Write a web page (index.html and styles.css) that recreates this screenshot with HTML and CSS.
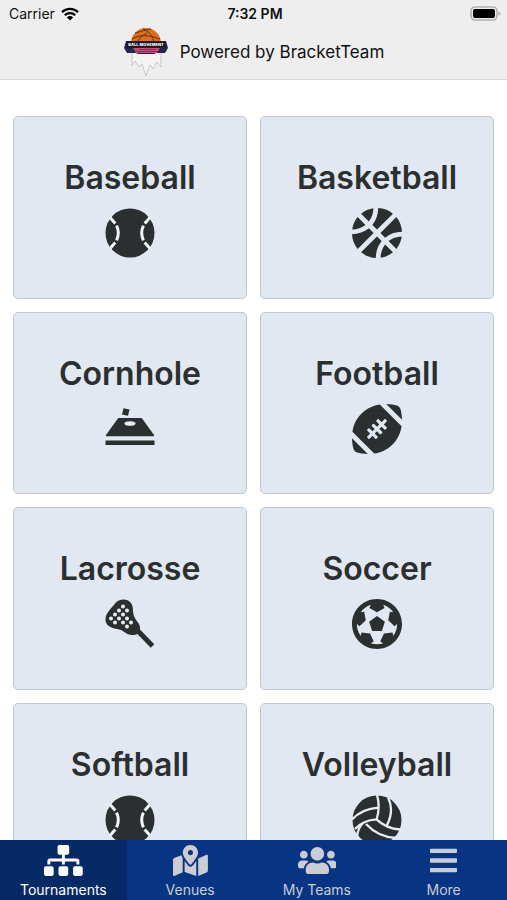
FILE: index.html
```html
<!DOCTYPE html>
<html lang="en">
<head>
<meta charset="utf-8">
<meta name="viewport" content="width=device-width, initial-scale=1">
<title>Tournaments</title>
<link rel="stylesheet" href="styles.css">
</head>
<body>
<header class="top">
  <div class="status">
    <div class="carrier">
      <span>Carrier</span>
      <svg class="wifi" viewBox="0 0 18 14" aria-hidden="true"><path d="M1 5.2a11.5 11.5 0 0 1 16 0M3.8 8.2a7.4 7.4 0 0 1 10.4 0" fill="none" stroke="#000" stroke-width="2.3"/><path d="M9 13.4 5.9 10.4a4.4 4.4 0 0 1 6.2 0z"/></svg>
    </div>
    <time class="clock">7:32 PM</time>
    <div class="power">
      <svg class="battery" viewBox="0 0 31 15" aria-hidden="true"><rect x="1" y="1" width="26" height="13" rx="4" fill="#eee" stroke="#b1b1b1" stroke-width="1.6"/><rect x="3" y="3" width="22" height="9" rx="2"/><path d="M28.4 5.2q2 .8 2 2.3t-2 2.3z" fill="#b1b1b1"/></svg>
    </div>
  </div>
  <div class="brand">
    <svg class="logo" viewBox="0 0 46 50" aria-hidden="true">
      <path d="M9 26v13l3-5 4 6 3-3 4 12 4-11 3 4 4-7 4 5V26" fill="#f3f3f3" stroke="#bdbdbd" stroke-width=".8"/>
      <path d="M8 16a15 15 0 0 1 30 0z" fill="#dc6f1c"/>
      <path d="M9 12Q20 5 37 12M20 1.500Q29 6 31 15M12 6Q22 3 28 2M14 15Q17 9 24 6" fill="none" stroke="#6b3410" stroke-width="1"/>
      <path d="M3 14h40l2 7-3 5H33l-2 1H15l-2-1H4l-3-5z" fill="#202850"/>
      <path d="M10 21h27l-3 5H13z" fill="#c0506f"/>
      <path d="M12 24.500h23M16 22.500h17" stroke="#732c56" stroke-width=".8"/>
      <path d="M4 14.500h38l1 6H3z" fill="#19181e"/>
      <text x="23" y="19" text-anchor="middle" class="logo-text">BALL MOVEMENT</text>
    </svg>
    <span>Powered by BracketTeam</span>
  </div>
</header>

<main class="sports">
  <a class="card" href="#baseball"><h2>Baseball</h2>
    <svg class="ball" viewBox="0 0 50 50" aria-hidden="true"><circle cx="25" cy="25" r="24.5"/><path class="seam" d="M5 9.5 10.3 15.5M11.6 17.7q3.4 7.3 0 14.6M10.3 34.5 5 40.5M45 9.5 39.7 15.5M38.4 17.7q-3.4 7.3 0 14.6M39.7 34.5 45 40.5"/></svg></a>
  <a class="card" href="#basketball"><h2>Basketball</h2>
    <svg class="ball" viewBox="0 8 496 496" aria-hidden="true"><path d="M212.3 10.3c-43.8 6.3-86.2 24.1-122.2 53.8l77.4 77.4c27.8-35.8 43.3-81.2 44.8-131.2zM248 222L405.9 64.1c-42.4-35-93.6-53.5-145.5-56.1-1.2 63.9-21.5 122.3-58.7 167.7L248 222zM56.1 98.1c-29.7 36-47.5 78.4-53.8 122.2 50-1.5 95.5-17 131.2-44.8L56.1 98.1zm272.2 204.2c45.3-37.1 103.7-57.4 167.7-58.7-2.6-51.9-21.1-103.1-56.1-145.5L282.1 256l46.2 46.3zM248 290L90.1 447.9c42.4 34.9 93.6 53.5 145.5 56.1 1.3-64 21.6-122.4 58.7-167.7L248 290zm191.9 123.9c29.7-36 47.5-78.4 53.8-122.2-50.1 1.6-95.5 17.1-131.2 44.8l77.4 77.4zM167.7 209.7C122.3 246.9 63.9 267.3 0 268.4c2.6 51.9 21.1 103.1 56.1 145.5L213.9 256l-46.2-46.3zm116 292c43.8-6.3 86.2-24.1 122.2-53.8l-77.4-77.4c-27.7 35.7-43.2 81.2-44.8 131.2z"/></svg></a>
  <a class="card" href="#cornhole"><h2>Cornhole</h2>
    <svg class="ball" viewBox="0 0 50 50" aria-hidden="true"><path d="M18.5 4.200 24.500 5.500 23 11.800 17 10.400zM14 14h22q.8 0 1.300.8L49.200 31.200q.3 1-.7 1H1.500q-1 0-.7-1L12.700 14.800Q13.200 14 14 14zM.500 36.500h49v4.500H.500z"/><ellipse cx="25" cy="19.500" rx="5.500" ry="2.300" class="hole"/></svg></a>
  <a class="card" href="#football"><h2>Football</h2>
    <svg class="ball" viewBox="0 8 496 496" aria-hidden="true"><path d="M481.5 60.3c-4.8-18.2-19.1-32.5-37.3-37.4C420.3 16.5 383 8.9 339.4 8L496 164.8c-.8-43.5-8.2-80.6-14.5-104.5zm-467 391.4c4.8 18.2 19.1 32.5 37.3 37.4 23.9 6.4 61.2 14 104.8 14.9L0 347.2c.8 43.5 8.2 80.6 14.5 104.5zM4.2 283.4L220.4 500c132.5-19.4 248.8-118.700 271.500-271.400L275.600 12C143.100 31.400 26.800 130.700 4.200 283.400zm317.300-123.600c3.100-3.100 8.200-3.100 11.300 0l11.300 11.300c3.100 3.100 3.100 8.200 0 11.300l-28.300 28.300 28.300 28.300c3.100 3.100 3.100 8.200 0 11.300l-11.300 11.300c-3.100 3.100-8.200 3.100-11.300 0l-28.300-28.300-22.600 22.700 28.300 28.300c3.100 3.100 3.100 8.200 0 11.300l-11.300 11.300c-3.100 3.100-8.200 3.100-11.300 0L248 278.600l-22.600 22.600 28.300 28.300c3.100 3.100 3.100 8.200 0 11.300l-11.300 11.300c-3.100 3.100-8.200 3.100-11.300 0l-28.300-28.300-28.300 28.300c-3.100 3.100-8.200 3.100-11.300 0l-11.300-11.300c-3.100-3.100-3.100-8.200 0-11.300l28.300-28.300-28.300-28.200c-3.100-3.100-3.100-8.200 0-11.300l11.300-11.300c3.100-3.100 8.200-3.100 11.300 0l28.300 28.300 22.600-22.600-28.300-28.300c-3.100-3.100-3.100-8.200 0-11.300l11.300-11.300c3.100-3.100 8.200-3.100 11.300 0l28.300 28.300 22.600-22.600-28.300-28.300c-3.100-3.100-3.100-8.200 0-11.300l11.300-11.300c3.100-3.100 8.200-3.100 11.300 0l28.300 28.300 28.300-28.500z"/></svg></a>
  <a class="card" href="#lacrosse"><h2>Lacrosse</h2>
    <svg class="ball" viewBox="0 0 50 50" aria-hidden="true"><path d="M32 31 47.500 47" fill="none" stroke="#2b2f30" stroke-width="5"/><path d="M10 4.500C14-.5 22-1 26 4c3 4 1 9 3.500 14 1.500 4 6 7 5.500 11.500-.5 5-4 7-9 6.500-5-.5-8-5.500-14-6C5 29 0 26 .5 20 1 13.500 6 10 10 4.500z"/><g class="hole"><circle cx="18" cy="7.500" r="2"/><circle cx="14" cy="11.500" r="2"/><circle cx="22" cy="11.500" r="2"/><circle cx="10" cy="15.500" r="2"/><circle cx="18" cy="15.500" r="2"/><circle cx="6" cy="19.500" r="2"/><circle cx="14" cy="19.500" r="2"/><circle cx="22" cy="19.500" r="2"/><circle cx="10" cy="23.500" r="2"/><circle cx="18" cy="23.500" r="2"/><circle cx="26" cy="23.500" r="2"/><circle cx="22" cy="27.500" r="2"/></g></svg></a>
  <a class="card" href="#soccer"><h2>Soccer</h2>
    <svg class="ball" viewBox="8 8 496 496" aria-hidden="true"><path d="M504 256c0 136.967-111.033 248-248 248S8 392.967 8 256 119.033 8 256 8s248 111.033 248 248zm-48 0l-.003-.282-26.064 22.741-62.679-58.5 16.454-84.355 34.303 3.072c-24.889-34.216-60.004-60.089-100.709-73.141l13.651 31.939L256 139l-74.953-41.525 13.651-31.939c-40.631 13.028-75.78 38.87-100.709 73.141l34.565-3.073 16.192 84.355-62.678 58.5-26.064-22.741-.003.282c0 43.015 13.497 83.952 38.472 117.991l7.704-33.897 85.138 10.447 36.301 77.826-29.902 17.786c40.202 13.122 84.29 13.148 124.572 0l-29.902-17.786 36.301-77.826 85.138-10.447 7.704 33.897C442.503 339.952 456 299.015 456 256zm-248.102 69.571l-29.894-91.312L256 177.732l77.996 56.527-29.622 91.312h-96.476z"/></svg></a>
  <a class="card" href="#softball"><h2>Softball</h2>
    <svg class="ball" viewBox="0 0 50 50" aria-hidden="true"><circle cx="25" cy="25" r="24.5"/><path class="seam" d="M5 9.5 10.3 15.5M11.6 17.7q3.4 7.3 0 14.6M10.3 34.5 5 40.5M45 9.5 39.7 15.5M38.4 17.7q-3.4 7.3 0 14.6M39.7 34.5 45 40.5"/></svg></a>
  <a class="card" href="#volleyball"><h2>Volleyball</h2>
    <svg class="ball" viewBox="0 0 50 50" aria-hidden="true"><circle cx="25" cy="25" r="24.5"/><path class="panel" d="M25 0Q28.500 12 24.500 25M0 24.500Q10 14 26 12.700M3 34Q11 25 24.500 24.300M36 2.500Q42.500 15 35 30M24.500 24.300Q34 33.500 48.500 34.500M14 29Q26 42 44 43M11 28Q6 33 5 41"/></svg></a>
</main>

<nav class="tabs" aria-label="Main">
  <a class="tab active" href="#tournaments" aria-current="page">
    <svg viewBox="0 0 640 512" aria-hidden="true"><path d="M128 352H32c-17.670 0-32 14.330-32 32v96c0 17.670 14.330 32 32 32h96c17.670 0 32-14.330 32-32v-96c0-17.670-14.330-32-32-32zm-24-80h192v48h48v-48h192v48h48v-57.590c0-21.170-17.230-38.410-38.410-38.410H344v-64h40c17.670 0 32-14.330 32-32V32c0-17.670-14.330-32-32-32H256c-17.670 0-32 14.330-32 32v96c0 17.670 14.330 32 32 32h40v64H94.410C73.230 224 56 241.230 56 262.410V320h48v-48zm264 80h-96c-17.670 0-32 14.330-32 32v96c0 17.670 14.330 32 32 32h96c17.670 0 32-14.330 32-32v-96c0-17.670-14.330-32-32-32zm240 0h-96c-17.670 0-32 14.330-32 32v96c0 17.670 14.330 32 32 32h96c17.670 0 32-14.330 32-32v-96c0-17.670-14.330-32-32-32z"/></svg>
    <span>Tournaments</span></a>
  <a class="tab" href="#venues">
    <svg viewBox="0 0 576 512" aria-hidden="true"><path d="M288 0c-69.590 0-126 56.410-126 126 0 56.260 82.350 158.800 113.900 196.020 6.390 7.540 17.820 7.540 24.200 0C331.650 284.800 414 182.260 414 126 414 56.410 357.590 0 288 0zm0 168c-23.200 0-42-18.800-42-42s18.800-42 42-42 42 18.800 42 42-18.800 42-42 42zM20.120 215.950A32.006 32.006 0 0 0 0 245.660v250.320c0 11.320 11.430 19.060 21.940 14.860L160 448V214.920c-8.840-15.980-16.070-31.540-21.250-46.420L20.120 215.950zM288 359.670c-14.070 0-27.380-6.180-36.510-16.960-19.660-23.200-40.570-49.620-59.490-76.720v182l192 64V266c-18.920 27.090-39.820 53.520-59.490 76.720-9.130 10.770-22.440 16.950-36.510 16.950zm266.060-198.510L416 224v288l139.880-55.950A31.996 31.996 0 0 0 576 426.340V176.020c0-11.320-11.430-19.060-21.940-14.860z"/></svg>
    <span>Venues</span></a>
  <a class="tab" href="#teams">
    <svg viewBox="0 0 640 512" aria-hidden="true"><path d="M96 224c35.300 0 64-28.700 64-64s-28.700-64-64-64-64 28.700-64 64 28.700 64 64 64zm448 0c35.300 0 64-28.700 64-64s-28.700-64-64-64-64 28.700-64 64 28.700 64 64 64zm32 32h-64c-17.600 0-33.500 7.100-45.100 18.600 40.300 22.100 68.900 62 75.100 109.400h66c17.700 0 32-14.300 32-32v-32c0-35.300-28.700-64-64-64zm-256 0c61.900 0 112-50.100 112-112S381.900 32 320 32 208 82.100 208 144s50.100 112 112 112zm76.800 32h-8.300c-20.800 10-43.900 16-68.500 16s-47.600-6-68.500-16h-8.300C179.600 288 128 339.600 128 403.200V432c0 26.500 21.500 48 48 48h288c26.500 0 48-21.500 48-48v-28.800c0-63.600-51.600-115.200-115.200-115.200zm-223.700-13.400C161.500 263.100 145.600 256 128 256H64c-35.300 0-64 28.700-64 64v32c0 17.700 14.300 32 32 32h65.900c6.300-47.400 34.900-87.300 75.200-109.400z"/></svg>
    <span>My Teams</span></a>
  <a class="tab" href="#more">
    <svg viewBox="0 0 448 512" aria-hidden="true"><path d="M16 132h416c8.837 0 16-7.163 16-16V76c0-8.837-7.163-16-16-16H16C7.163 60 0 67.163 0 76v40c0 8.837 7.163 16 16 16zm0 160h416c8.837 0 16-7.163 16-16v-40c0-8.837-7.163-16-16-16H16c-8.837 0-16 7.163-16 16v40c0 8.837 7.163 16 16 16zm0 160h416c8.837 0 16-7.163 16-16v-40c0-8.837-7.163-16-16-16H16c-8.837 0-16 7.163-16 16v40c0 8.837 7.163 16 16 16z"/></svg>
    <span>More</span></a>
</nav>
</body>
</html>
```
FILE: styles.css
```css
* { box-sizing: border-box; }

body {
  margin: 0;
  height: 100vh;
  display: flex;
  flex-direction: column;
  background: #fff;
  color: #111;
  font-family: Inter, "Liberation Sans", sans-serif;
}

svg { display: block; flex: none; }
a { text-decoration: none; color: inherit; }

.top {
  flex: none;
  background: #eee;
  border-bottom: 1px solid #d6d6d6;
}

.status {
  display: grid;
  grid-template-columns: 1fr auto 1fr;
  align-items: center;
  height: 27px;
  padding: 0 6px 0 9px;
  font-size: 14px;
}

.carrier { display: flex; align-items: center; gap: 6px; }
.wifi { width: 18px; height: 14px; }
.clock { font-size: 14px; font-weight: 600; }
.power { display: flex; justify-content: flex-end; }
.battery { width: 31px; height: 15px; }

.brand {
  display: flex;
  align-items: center;
  justify-content: center;
  gap: 11px;
  height: 52px;
  padding-bottom: 2px;
  font-size: 17px;
}

.logo { width: 46px; height: 50px; }
.logo-text { font-size: 4px; font-weight: 800; fill: #fff; }

.sports {
  flex: 1;
  min-height: 0;
  overflow-y: auto;
  scrollbar-width: none;
  display: grid;
  grid-template-columns: 1fr 1fr;
  align-content: start;
  gap: 13px;
  padding: 36px 13px 13px;
}

.card {
  display: flex;
  flex-direction: column;
  align-items: center;
  justify-content: center;
  gap: 11px;
  aspect-ratio: 1.282;
  padding-top: 2px;
  background: #e1e8f1;
  border: 1px solid #bdc8d3;
  border-radius: 5px;
  color: #2b2f30;
}

.card h2 {
  margin: 0;
  font-size: 32px;
  line-height: 39px;
  font-weight: 600;
}

.ball { width: 50px; height: 50px; fill: #2b2f30; }
.seam { fill: none; stroke: #f1f4f7; stroke-width: 3; }
.panel { fill: none; stroke: #e8eef4; stroke-width: 2.3; }
.hole { fill: #e8eef4; }

.tabs {
  flex: none;
  display: grid;
  grid-template-columns: repeat(4, 1fr);
  height: 60px;
  background: #083583;
}

.tab {
  display: flex;
  flex-direction: column;
  align-items: center;
  gap: 5px;
  padding-top: 5px;
  color: #cbcdd2;
  font-size: 14px;
  line-height: 18px;
}

.tab svg { height: 31px; fill: currentColor; }
.active { background: #062a66; color: #fff; }
```
